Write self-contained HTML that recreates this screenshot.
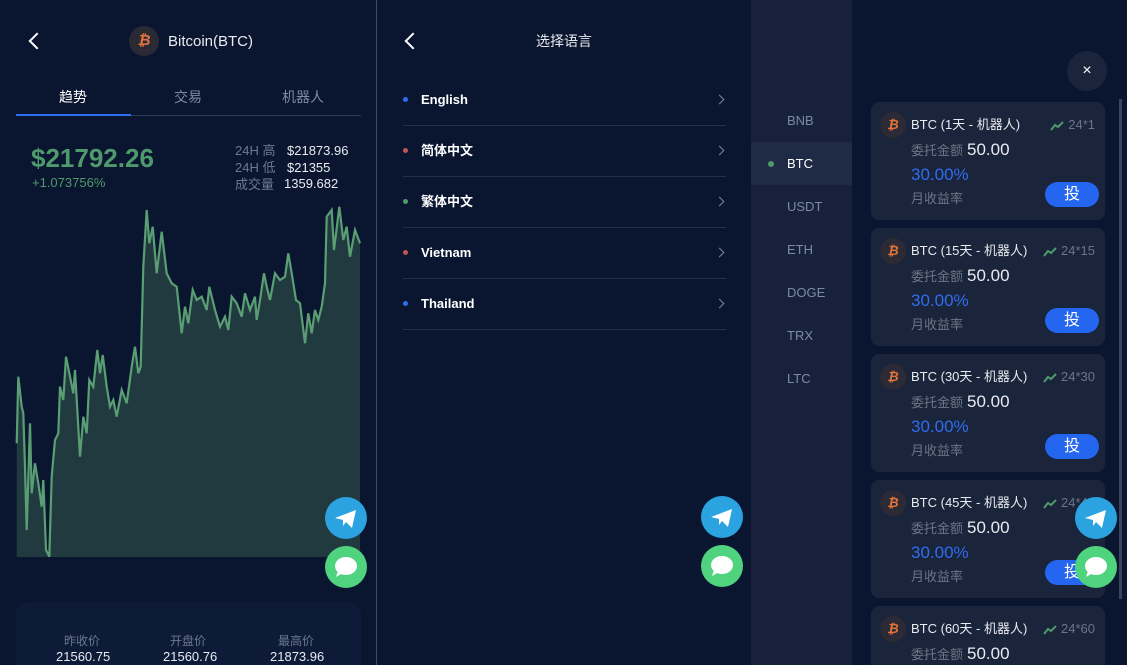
<!DOCTYPE html>
<html><head><meta charset="utf-8"><style>
*{margin:0;padding:0;box-sizing:border-box}
html,body{width:1127px;height:665px;overflow:hidden}
body{background:#0a1630;font-family:"Liberation Sans","Noto Sans CJK SC",sans-serif;position:relative;color:#fff}
.a{position:absolute}
.panel{position:absolute;top:0;height:665px;background:#0a1630;overflow:hidden}
.back{position:absolute;width:12px;height:12px;border-left:2px solid #fff;border-bottom:2px solid #fff;transform:rotate(45deg)}
.coin{position:absolute;width:30px;height:30px;border-radius:50%;background:#2a2a35;color:#e2743a;font-weight:bold;font-size:15px;text-align:center;line-height:30px;font-style:italic}
.fb{position:absolute;width:42px;height:42px;border-radius:50%}
.tg{background:#2aa3e0}
.ch{background:#4fd37e}
.li{position:absolute;left:26px;width:323px;height:51px;border-bottom:1px solid #233049;font-size:13px;font-weight:bold;line-height:16px}
.li .d{position:absolute;left:0;top:22px;width:5px;height:5px;border-radius:50%}
.li span.t{position:absolute;left:18px;top:17px}
.li .ar{position:absolute;right:3px;top:21px;width:7px;height:7px;border-right:1.5px solid #7b8597;border-top:1.5px solid #7b8597;transform:rotate(45deg)}
.side{position:absolute;left:0;width:101px;height:43px;font-size:13px;color:#7d8aa5;line-height:43px;padding-left:36px}
.card{position:absolute;left:120px;width:234px;height:118px;background:#1a243a;border-radius:8px;overflow:hidden}
.card .coin{left:9px;top:10px;width:26px;height:26px;line-height:26px;font-size:13px;background:#2c2a34}
.card .tt{position:absolute;left:40px;top:15px;font-size:13px;line-height:16px;color:#e8ebf0}
.card .tr{position:absolute;right:10px;top:15px;font-size:13px;line-height:16px;color:#6c7587;white-space:nowrap}
.card .tr svg{vertical-align:middle;margin-right:4px}
.card .amt{position:absolute;left:40px;top:38px;font-size:13px;line-height:20px;color:#6c7587}
.card .amt b{font-weight:normal;color:#e8ebf0;font-size:17px;margin-left:4px}
.card .pct{position:absolute;left:40px;top:63px;font-size:17px;line-height:20px;color:#2f6df0}
.card .my{position:absolute;left:40px;top:89px;font-size:13px;line-height:16px;color:#6c7587}
.card .btn{position:absolute;left:174px;top:80px;width:54px;height:25px;border-radius:13px;background:#2466f0;text-align:center;font-size:16px;line-height:25px}
</style></head><body>

<div class="panel" style="left:0;width:376px">
  <div class="back" style="left:31px;top:35px"></div>
  <div class="coin" style="left:129px;top:26px">₿</div>
  <div class="a" style="left:168px;top:33px;font-size:15px;color:#e8ebf0">Bitcoin(BTC)</div>
  <div class="a" style="left:59px;top:87px;font-size:14px;color:#fff">趋势</div>
  <div class="a" style="left:174px;top:87px;font-size:14px;color:#7d8aa5">交易</div>
  <div class="a" style="left:282px;top:87px;font-size:14px;color:#7d8aa5">机器人</div>
  <div class="a" style="left:16px;top:115px;width:345px;height:1px;background:#2d3a55"></div>
  <div class="a" style="left:16px;top:114px;width:115px;height:2px;background:#2f6df0"></div>
  <div class="a" style="left:31px;top:143px;font-size:26px;font-weight:bold;color:#4f9a6c">$21792.26</div>
  <div class="a" style="left:32px;top:175px;font-size:13px;color:#4f9a6c">+1.073756%</div>
  <div class="a" style="left:235px;top:142px;font-size:13px;color:#6b7891;line-height:17px">24H 高<br>24H 低<br>成交量</div>
  <div class="a" style="left:287px;top:142px;font-size:13px;color:#e8ebf0;line-height:17px">$21873.96<br>$21355</div>
  <div class="a" style="left:284px;top:176px;font-size:13px;color:#e8ebf0">1359.682</div>
  <svg class="a" style="left:0;top:0" width="376" height="600">
    <path d="M16.7,557 L16.7,443.3 L18.3,376.7 L21.7,406.7 L23.3,413.3 L25,466.7 L26.7,530 L30,423.3 L31.7,493.3 L35,463.3 L38.3,483.3 L41.7,506.7 L43.3,480 L46,550 L49.3,556.7 L51.7,476.7 L55,440 L58.3,433.3 L60,386.7 L63.3,400 L66,356.7 L70,376.7 L73.3,393.3 L75,370 L80,456.7 L83.3,416.7 L86.7,433.3 L89.3,380 L93.3,386.7 L97.3,350 L100,373.3 L102.7,355 L106.7,386.7 L110,406.7 L113.3,400 L116.7,416.7 L121.7,390 L126.7,403.3 L131.7,366.7 L135,346.7 L138.3,373.3 L140.7,366.7 L143.3,266.7 L146.7,210 L149.3,243.3 L152.7,226.7 L156.7,273.3 L161.7,231.7 L166.7,273.3 L171.7,283.3 L176.7,286.7 L181.7,333.3 L185,306.7 L188.3,323.3 L192.7,290 L196.7,300 L201.7,296.7 L206.7,310 L209.3,286.7 L215,310 L220,326.7 L225,316.7 L228.3,330 L231.7,296.7 L236.7,303.3 L241.7,316.7 L245,293.3 L250,310 L255,296.7 L256.7,320 L260,300 L264,273.3 L266.7,286.7 L270,300 L275,273.3 L280,280 L285,276.7 L288.3,253.3 L291.7,273.3 L296,300 L300,303.3 L305,343.3 L308.3,313.3 L311.7,333.3 L315,310 L318.3,320 L321.7,306.7 L325,283.3 L326.7,216.7 L331.7,210 L334,250 L339.3,206.7 L343.3,240 L346.7,226.7 L350,256.7 L355,230 L360,243.3 L360,557 Z" fill="#213a40"/>
    <path d="M16.7,443.3 L18.3,376.7 L21.7,406.7 L23.3,413.3 L25,466.7 L26.7,530 L30,423.3 L31.7,493.3 L35,463.3 L38.3,483.3 L41.7,506.7 L43.3,480 L46,550 L49.3,556.7 L51.7,476.7 L55,440 L58.3,433.3 L60,386.7 L63.3,400 L66,356.7 L70,376.7 L73.3,393.3 L75,370 L80,456.7 L83.3,416.7 L86.7,433.3 L89.3,380 L93.3,386.7 L97.3,350 L100,373.3 L102.7,355 L106.7,386.7 L110,406.7 L113.3,400 L116.7,416.7 L121.7,390 L126.7,403.3 L131.7,366.7 L135,346.7 L138.3,373.3 L140.7,366.7 L143.3,266.7 L146.7,210 L149.3,243.3 L152.7,226.7 L156.7,273.3 L161.7,231.7 L166.7,273.3 L171.7,283.3 L176.7,286.7 L181.7,333.3 L185,306.7 L188.3,323.3 L192.7,290 L196.7,300 L201.7,296.7 L206.7,310 L209.3,286.7 L215,310 L220,326.7 L225,316.7 L228.3,330 L231.7,296.7 L236.7,303.3 L241.7,316.7 L245,293.3 L250,310 L255,296.7 L256.7,320 L260,300 L264,273.3 L266.7,286.7 L270,300 L275,273.3 L280,280 L285,276.7 L288.3,253.3 L291.7,273.3 L296,300 L300,303.3 L305,343.3 L308.3,313.3 L311.7,333.3 L315,310 L318.3,320 L321.7,306.7 L325,283.3 L326.7,216.7 L331.7,210 L334,250 L339.3,206.7 L343.3,240 L346.7,226.7 L350,256.7 L355,230 L360,243.3" fill="none" stroke="#5a9e73" stroke-width="2.2"/>
  </svg>
  <div class="a" style="left:16px;top:602px;width:345px;height:63px;background:#0d1a38;border-radius:12px 12px 0 0"></div>
  <div class="a" style="left:64px;top:633px;font-size:12px;color:#6b7891;line-height:16px">昨收价</div>
  <div class="a" style="left:170px;top:633px;font-size:12px;color:#6b7891;line-height:16px">开盘价</div>
  <div class="a" style="left:278px;top:633px;font-size:12px;color:#6b7891;line-height:16px">最高价</div>
  <div class="a" style="left:56px;top:649px;font-size:13px;line-height:15px;color:#e8ebf0">21560.75</div>
  <div class="a" style="left:163px;top:649px;font-size:13px;line-height:15px;color:#e8ebf0">21560.76</div>
  <div class="a" style="left:270px;top:649px;font-size:13px;line-height:15px;color:#e8ebf0">21873.96</div>
</div>
<div class="a" style="left:376px;top:0;width:1px;height:665px;background:#3a4a66"></div>

<div class="panel" style="left:377px;width:374px">
  <div class="back" style="left:30px;top:35px"></div>
  <div class="a" style="left:159px;top:32px;font-size:14px;line-height:18px;color:#e8ebf0">选择语言</div>
  <div class="li" style="top:75px"><div class="d" style="background:#2f6df0"></div><span class="t">English</span><div class="ar"></div></div>
  <div class="li" style="top:126px"><div class="d" style="background:#c05454"></div><span class="t">简体中文</span><div class="ar"></div></div>
  <div class="li" style="top:177px"><div class="d" style="background:#4f9a6c"></div><span class="t">繁体中文</span><div class="ar"></div></div>
  <div class="li" style="top:228px"><div class="d" style="background:#c05454"></div><span class="t">Vietnam</span><div class="ar"></div></div>
  <div class="li" style="top:279px"><div class="d" style="background:#2f6df0"></div><span class="t">Thailand</span><div class="ar"></div></div>
</div>

<div class="panel" style="left:751px;width:376px">
  <div class="a" style="left:0;top:0;width:101px;height:665px;background:#17223a"></div>
  <div class="side" style="top:99px">BNB</div>
  <div class="side" style="top:142px;background:#1f2b44;color:#fff"><span style="position:absolute;left:17px;top:19px;width:6px;height:6px;border-radius:50%;background:#4f9a6c"></span>BTC</div>
  <div class="side" style="top:185px">USDT</div>
  <div class="side" style="top:228px">ETH</div>
  <div class="side" style="top:271px">DOGE</div>
  <div class="side" style="top:314px">TRX</div>
  <div class="side" style="top:357px">LTC</div>
  <div class="a" style="left:316px;top:51px;width:40px;height:40px;border-radius:50%;background:#1a243a;text-align:center;line-height:40px;font-size:16px;color:#fff">×</div>
  <div class="a" style="left:368px;top:99px;width:3px;height:500px;background:#3a4458"></div>

  <div class="card" style="top:102px"><div class="coin">₿</div><div class="tt">BTC (1天 - 机器人)</div><div class="tr"><svg width="14" height="10"><path d="M1 9 L5 4 L8 6 L13 1" fill="none" stroke="#4f9a6c" stroke-width="2"/></svg>24*1</div><div class="amt">委托金额<b>50.00</b></div><div class="pct">30.00%</div><div class="my">月收益率</div><div class="btn">投</div></div>
  <div class="card" style="top:228px"><div class="coin">₿</div><div class="tt">BTC (15天 - 机器人)</div><div class="tr"><svg width="14" height="10"><path d="M1 9 L5 4 L8 6 L13 1" fill="none" stroke="#4f9a6c" stroke-width="2"/></svg>24*15</div><div class="amt">委托金额<b>50.00</b></div><div class="pct">30.00%</div><div class="my">月收益率</div><div class="btn">投</div></div>
  <div class="card" style="top:354px"><div class="coin">₿</div><div class="tt">BTC (30天 - 机器人)</div><div class="tr"><svg width="14" height="10"><path d="M1 9 L5 4 L8 6 L13 1" fill="none" stroke="#4f9a6c" stroke-width="2"/></svg>24*30</div><div class="amt">委托金额<b>50.00</b></div><div class="pct">30.00%</div><div class="my">月收益率</div><div class="btn">投</div></div>
  <div class="card" style="top:480px"><div class="coin">₿</div><div class="tt">BTC (45天 - 机器人)</div><div class="tr"><svg width="14" height="10"><path d="M1 9 L5 4 L8 6 L13 1" fill="none" stroke="#4f9a6c" stroke-width="2"/></svg>24*45</div><div class="amt">委托金额<b>50.00</b></div><div class="pct">30.00%</div><div class="my">月收益率</div><div class="btn">投</div></div>
  <div class="card" style="top:606px;height:59px;border-radius:8px 8px 0 0"><div class="coin">₿</div><div class="tt">BTC (60天 - 机器人)</div><div class="tr"><svg width="14" height="10"><path d="M1 9 L5 4 L8 6 L13 1" fill="none" stroke="#4f9a6c" stroke-width="2"/></svg>24*60</div><div class="amt">委托金额<b>50.00</b></div></div>
</div>

<svg width="0" height="0" style="position:absolute"><defs>
<symbol id="tgi" viewBox="0 0 42 42"><path d="M10 21 L31 13 L27 31 L21 25 L18 29 L18 23 Z" fill="#fff"/></symbol>
<symbol id="chi" viewBox="0 0 42 42"><ellipse cx="21" cy="20" rx="11" ry="9" fill="#fff"/><path d="M13 25 L11 31 L18 27 Z" fill="#fff"/></symbol>
</defs></svg>
<svg class="fb tg" style="left:325px;top:497px"><use href="#tgi"/></svg>
<svg class="fb ch" style="left:325px;top:546px"><use href="#chi"/></svg>
<svg class="fb tg" style="left:701px;top:496px"><use href="#tgi"/></svg>
<svg class="fb ch" style="left:701px;top:545px"><use href="#chi"/></svg>
<svg class="fb tg" style="left:1075px;top:497px"><use href="#tgi"/></svg>
<svg class="fb ch" style="left:1075px;top:546px"><use href="#chi"/></svg>
</body></html>
